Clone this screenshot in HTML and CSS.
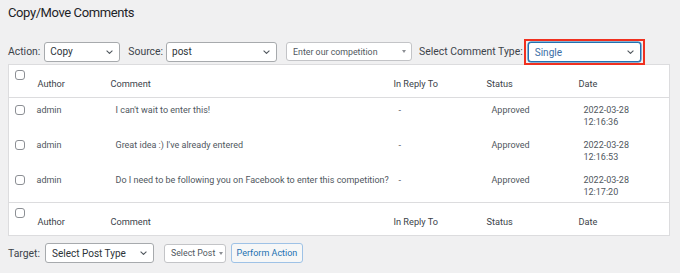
FILE: index.html
```html
<!DOCTYPE html>
<html>
<head>
<meta charset="utf-8">
<link rel="stylesheet" href="styles.css">
</head>
<body>
<div class="page">
  <h1 class="title">Copy/Move Comments</h1>
  <div class="toolbar">
    <span class="label">Action:</span>
    <div class="select w-action"><span>Copy</span><svg class="chev" width="7" height="4" viewBox="0 0 7 4"><path d="M0.6 0.6l2.9 2.8 2.9-2.8" fill="none" stroke="#50575e" stroke-width="1.1"/></svg></div>
    <span class="label lbl-source">Source:</span>
    <div class="select w-source"><span>post</span><svg class="chev" width="7" height="4" viewBox="0 0 7 4"><path d="M0.6 0.6l2.9 2.8 2.9-2.8" fill="none" stroke="#50575e" stroke-width="1.1"/></svg></div>
    <div class="select small w-post"><span>Enter our competition</span><span class="tri"></span></div>
    <span class="label lbl-type">Select Comment Type:</span>
    <div class="highlight">
      <div class="select focus w-type"><span>Single</span><svg class="chev" width="7" height="4" viewBox="0 0 7 4"><path d="M0.6 0.6l2.9 2.8 2.9-2.8" fill="none" stroke="#50575e" stroke-width="1.1"/></svg></div>
    </div>
  </div>
  <table class="list">
    <colgroup>
      <col class="c-cb"><col class="c-author"><col class="c-comment"><col class="c-reply"><col class="c-status"><col>
    </colgroup>
    <thead>
      <tr class="head">
        <th class="cb"><span class="box"></span></th>
        <th class="h-author">Author</th>
        <th>Comment</th>
        <th>In Reply To</th>
        <th>Status</th>
        <th>Date</th>
      </tr>
    </thead>
    <tbody>
      <tr class="row">
        <td class="cb"><span class="box"></span></td>
        <td class="author">admin</td>
        <td>I can't wait to enter this!</td>
        <td>-</td>
        <td class="status">Approved</td>
        <td>2022-03-28<br>12:16:36</td>
      </tr>
      <tr class="row">
        <td class="cb"><span class="box"></span></td>
        <td class="author">admin</td>
        <td>Great idea :) I've already entered</td>
        <td>-</td>
        <td class="status">Approved</td>
        <td>2022-03-28<br>12:16:53</td>
      </tr>
      <tr class="row last">
        <td class="cb"><span class="box"></span></td>
        <td class="author">admin</td>
        <td>Do I need to be following you on Facebook to enter this competition?</td>
        <td>-</td>
        <td class="status">Approved</td>
        <td>2022-03-28<br>12:17:20</td>
      </tr>
    </tbody>
    <tfoot>
      <tr class="head foot">
        <th class="cb"><span class="box"></span></th>
        <th class="h-author">Author</th>
        <th>Comment</th>
        <th>In Reply To</th>
        <th>Status</th>
        <th>Date</th>
      </tr>
    </tfoot>
  </table>
  <div class="toolbar bottom">
    <span class="label">Target:</span>
    <div class="select w-target"><span>Select Post Type</span><svg class="chev" width="7" height="4" viewBox="0 0 7 4"><path d="M0.6 0.6l2.9 2.8 2.9-2.8" fill="none" stroke="#50575e" stroke-width="1.1"/></svg></div>
    <div class="select small w-selpost"><span>Select Post</span><span class="tri"></span></div>
    <button class="btn">Perform Action</button>
  </div>
</div>
</body>
</html>
```
FILE: styles.css
```css
* { box-sizing: border-box; }
html, body { margin: 0; padding: 0; background: #f0f0f1; }
body {
  font-family: Roboto, "Liberation Sans", sans-serif;
  color: #3c434a;
  width: 680px;
  height: 273px;
  overflow: hidden;
  white-space: nowrap;
}
.page { padding: 0 8px; }
.title {
  margin: 0;
  padding-top: 2px;
  height: 39px;
  font-size: 13px;
  line-height: 22px;
  letter-spacing: -0.4px;
  font-weight: 400;
  color: #1d2327;
}
.toolbar {
  display: flex;
  align-items: center;
  height: 25px;
}
.toolbar > * { flex-shrink: 0; }
.label {
  font-size: 10.4px;
  color: #3c434a;
}
.select {
  display: flex;
  align-items: center;
  justify-content: space-between;
  height: 20px;
  background: #fff;
  border: 1px solid #a7aaad;
  border-radius: 3px;
  padding: 0 6px 0 5px;
  font-size: 10px;
  color: #2c3338;
}
.select.small {
  border-color: #c3c4c7;
  height: 19px;
  font-size: 8.8px;
  color: #50575e;
  padding: 0 5px 0 6px;
}
.tri {
  width: 0; height: 0;
  border-left: 2px solid transparent;
  border-right: 2px solid transparent;
  border-top: 3px solid #8c8f94;
  margin-left: 4px;
}
.w-action { width: 76px; margin-left: 4px; }
.lbl-source { margin-left: 8px; }
.w-source { width: 111px; margin-left: 3px; }
.w-post { width: 126px; margin-left: 9px; }
.lbl-type { margin-left: 7px; }
.highlight {
  margin-left: 1px;
  border: 2px solid #f0301f;
  padding: 1px 2px;
  display: flex;
  margin-top: 1px;
}
.select.focus {
  border-color: #2271b1;
  color: #3a6ea5;
  box-shadow: 0 0 0 0.5px #2271b1;
  padding-left: 6px;
}
.w-type { width: 113px; }

.list {
  width: 662px;
  border-collapse: collapse;
  table-layout: fixed;
  background: #fff;
  border: 1px solid #dcdcde;
  font-size: 9px;
}
.c-cb { width: 26px; }
.c-author { width: 72px; }
.c-comment { width: 283px; }
.c-reply { width: 93px; }
.c-status { width: 92px; }
.head th {
  height: 33px;
  text-align: left;
  font-weight: 400;
  padding: 5px 0 0 4px;
  vertical-align: middle;
  color: #3c434a;
  font-size: 9.2px;
}
thead .head th { border-bottom: 1px solid #dcdcde; }
.foot th { border-top: 1px solid #dcdcde; }
.head th.h-author { padding-left: 3px; }
.head th.cb { vertical-align: top; padding: 5px 0 0 6px; }
.box {
  display: block;
  width: 10px;
  height: 10px;
  border: 1px solid #8c8f94;
  border-radius: 3px;
  background: #fff;
}
.row td {
  height: 35px;
  vertical-align: top;
  padding: 6px 0 0 9px;
  line-height: 12px;
  color: #50575e;
}
.row td.author { padding-left: 2px; }
.row td.cb { padding: 7px 0 0 6px; }

.bottom { margin-top: 7px; height: 20px; }
.w-target { width: 109px; margin-left: 5px; padding-left: 6px; }
.w-selpost { width: 62px; margin-left: 10px; padding-left: 5px; }
.btn {
  margin-left: 5px;
  height: 20px;
  width: 72px;
  padding: 0;
  font-family: inherit;
  font-size: 9px;
  color: #2271b1;
  background: #f6f7f7;
  border: 1px solid #9ec2e6;
  border-radius: 3px;
}
```
